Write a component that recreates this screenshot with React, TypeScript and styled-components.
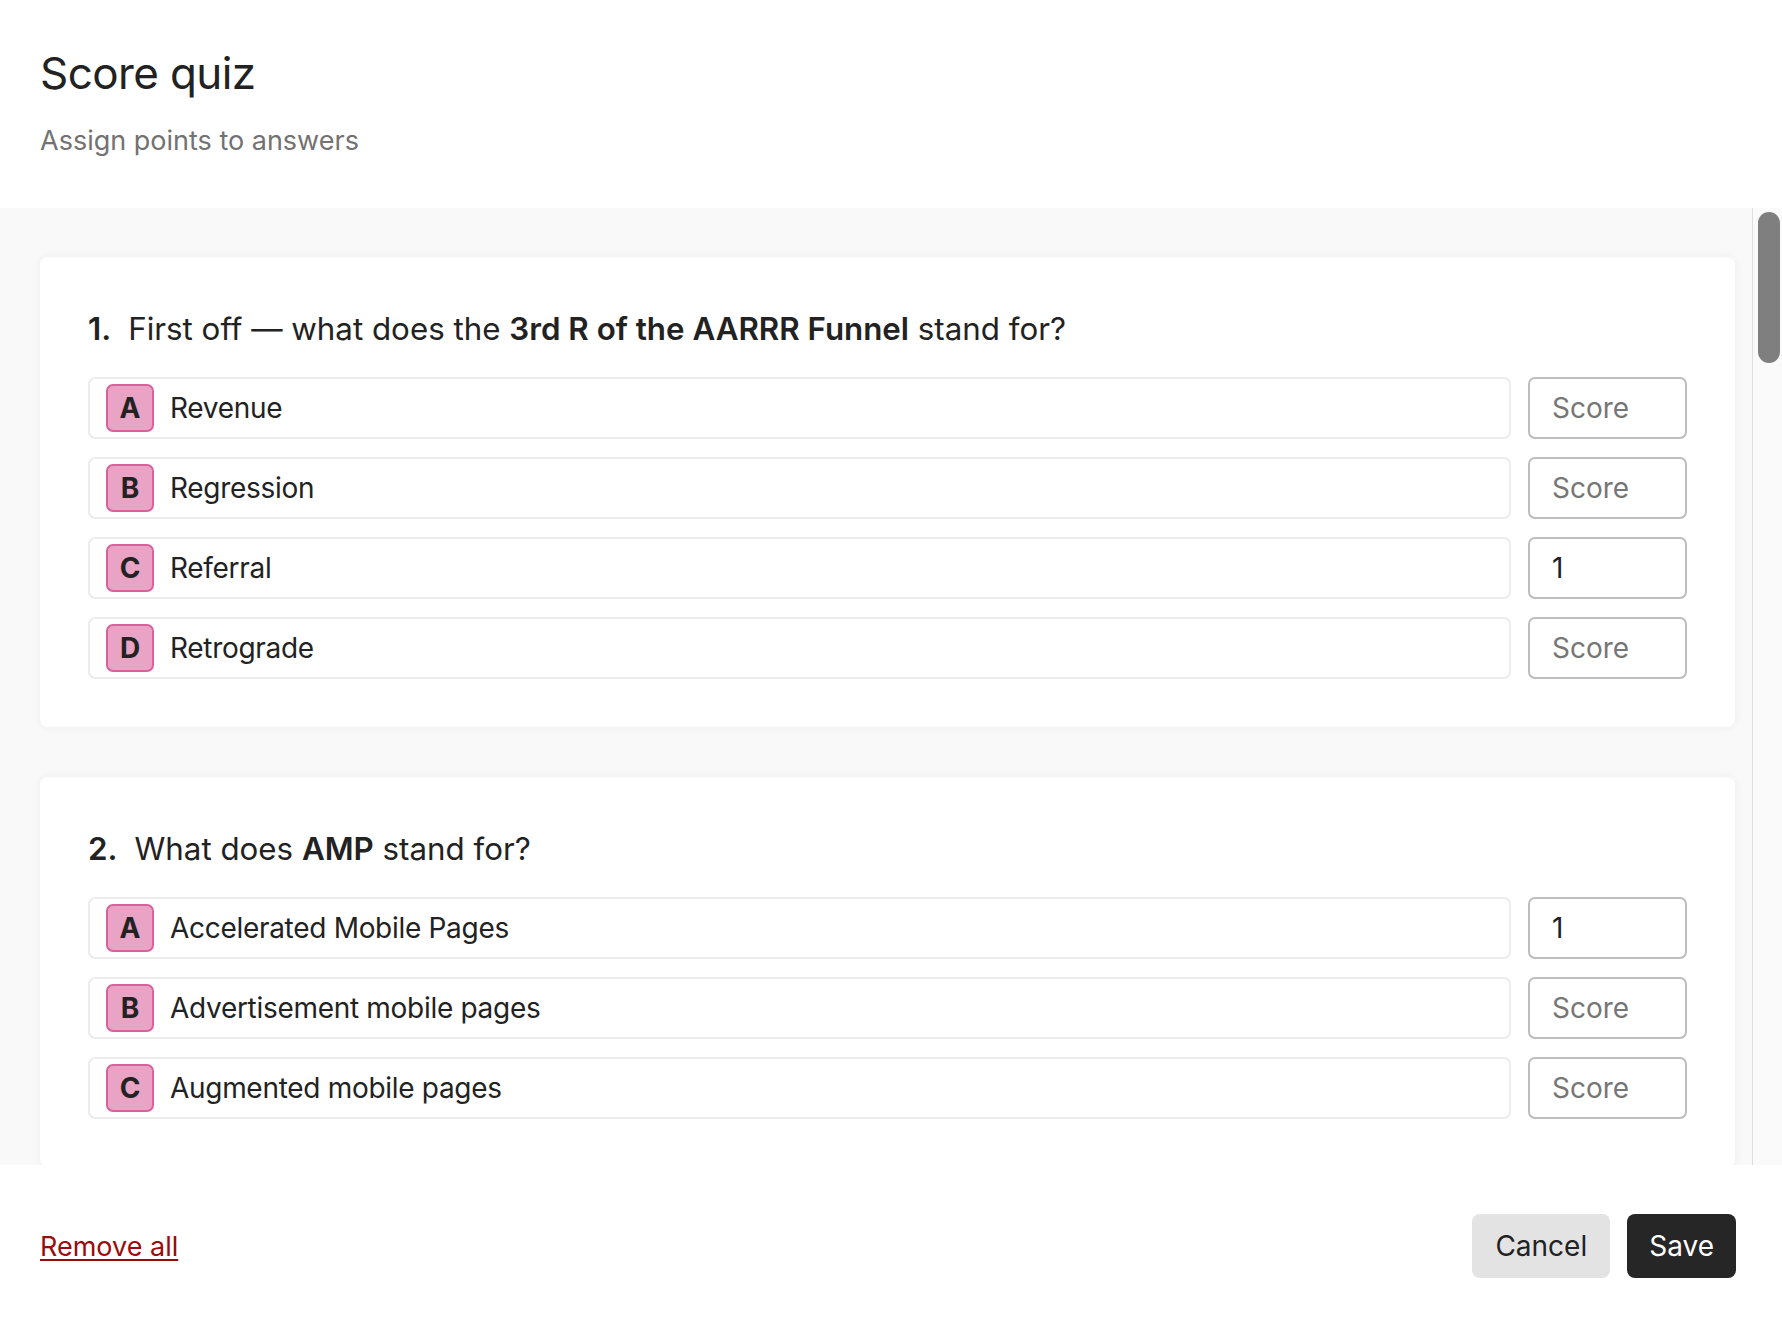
import React from 'react';
import styled, { createGlobalStyle } from 'styled-components';

interface Answer {
  text: string;
  score?: string;
}

interface Question {
  // parts of the prompt, odd entries are bold
  prompt: string[];
  answers: Answer[];
}

const questions: Question[] = [
  {
    prompt: ['First off \u2014 what does the ', '3rd R of the AARRR Funnel', ' stand for?'],
    answers: [
      { text: 'Revenue' },
      { text: 'Regression' },
      { text: 'Referral', score: '1' },
      { text: 'Retrograde' },
    ],
  },
  {
    prompt: ['What does ', 'AMP', ' stand for?'],
    answers: [
      { text: 'Accelerated Mobile Pages', score: '1' },
      { text: 'Advertisement mobile pages' },
      { text: 'Augmented mobile pages' },
    ],
  },
];

const LETTERS = 'ABCDEFGH';

const App: React.FC = () => {
  return (
    <>
      <GlobalStyle />
      <Page>
        <Header>
          <Title>Score quiz</Title>
          <Subtitle>Assign points to answers</Subtitle>
        </Header>

        <Body>
          <Content>
            {questions.map((q, qi) => (
              <Card key={qi}>
                <QuestionText>
                  <Number>{qi + 1}.</Number>
                  {q.prompt.map((part, pi) =>
                    pi % 2 === 1 ? <strong key={pi}>{part}</strong> : <span key={pi}>{part}</span>
                  )}
                </QuestionText>
                <AnswerList>
                  {q.answers.map((a, ai) => (
                    <AnswerRow key={ai}>
                      <AnswerBox>
                        <Badge>{LETTERS[ai]}</Badge>
                        <AnswerText>{a.text}</AnswerText>
                      </AnswerBox>
                      <ScoreInput placeholder="Score" defaultValue={a.score ?? ''} />
                    </AnswerRow>
                  ))}
                </AnswerList>
              </Card>
            ))}
          </Content>
          <ScrollTrack>
            <ScrollThumb />
          </ScrollTrack>
        </Body>

        <Footer>
          <RemoveLink href="#">Remove all</RemoveLink>
          <Actions>
            <Button>Cancel</Button>
            <Button $primary>Save</Button>
          </Actions>
        </Footer>
      </Page>
    </>
  );
};

const GlobalStyle = createGlobalStyle`
  html, body {
    margin: 0;
    padding: 0;
    background: #fff;
  }
  body {
    font-family: Inter, "Noto Sans", "Liberation Sans", sans-serif;
    color: #222;
  }
  * {
    box-sizing: border-box;
  }
`;

const Page = styled.div`
  height: 100vh;
  display: flex;
  flex-direction: column;
  overflow: hidden;
`;

const Header = styled.header`
  flex: none;
  height: 208px;
  padding: 47px 40px 0;
`;

const Title = styled.h1`
  margin: 0;
  font-size: 44px;
  line-height: 53px;
  font-weight: 400;
  letter-spacing: -0.6px;
  color: #222;
`;

const Subtitle = styled.p`
  margin: 23px 0 0;
  font-size: 27px;
  line-height: 35px;
  color: #727272;
`;

const Body = styled.div`
  flex: 1;
  min-height: 0;
  display: flex;
  background: #f9f9f9;
`;

const Content = styled.main`
  flex: 1;
  min-width: 0;
  overflow: hidden;
  padding: 49px 17px 0 40px;
  display: flex;
  flex-direction: column;
  gap: 50px;
`;

const ScrollTrack = styled.div`
  flex: none;
  width: 30px;
  background: #fafafa;
  border-left: 1px solid #dedede;
  padding: 4px 2px 0 5px;
`;

const ScrollThumb = styled.div`
  height: 151px;
  border-radius: 11px;
  background: #7f7f7f;
`;

const Card = styled.section`
  flex: none;
  background: #fff;
  border-radius: 8px;
  box-shadow: 0 0 10px rgba(0, 0, 0, 0.05);
  padding: 52px 48px 48px;
`;

const QuestionText = styled.h2`
  margin: 0 0 28px;
  font-size: 31.3px;
  line-height: 40px;
  font-weight: 400;
  color: #222;

  strong {
    font-weight: 600;
  }
`;

const Number = styled.span`
  font-weight: 600;
  margin-right: 17px;
`;

const AnswerList = styled.div`
  display: flex;
  flex-direction: column;
  gap: 18px;
`;

const AnswerRow = styled.div`
  display: flex;
  gap: 17px;
  height: 62px;
`;

const AnswerBox = styled.div`
  flex: 1;
  display: flex;
  align-items: center;
  gap: 16px;
  padding: 0 16px;
  border: 2px solid #ececec;
  border-radius: 7px;
`;

const Badge = styled.span`
  flex: none;
  width: 48px;
  height: 48px;
  display: flex;
  align-items: center;
  justify-content: center;
  background: #e8a3c5;
  border: 2px solid #d9619c;
  border-radius: 7px;
  font-size: 28px;
  font-weight: 700;
  color: #222;
`;

const AnswerText = styled.span`
  font-size: 28px;
  color: #222;
  letter-spacing: -0.3px;
`;

const ScoreInput = styled.input`
  flex: none;
  width: 159px;
  height: 62px;
  border: 2px solid #bdbdbd;
  border-radius: 7px;
  padding: 0 22px;
  font-family: inherit;
  font-size: 28px;
  color: #222;
  background: #fff;
  outline: none;

  &::placeholder {
    color: #767676;
  }
`;

const Footer = styled.footer`
  flex: none;
  height: 153px;
  padding: 49px 46px 40px 40px;
  display: flex;
  align-items: center;
  justify-content: space-between;
  background: #fff;
`;

const RemoveLink = styled.a`
  font-size: 27px;
  color: #970d0d;
  text-decoration: underline;
  text-underline-offset: 3px;
  text-decoration-thickness: 2px;
`;

const Actions = styled.div`
  display: flex;
  gap: 17px;
`;

const Button = styled.button<{ $primary?: boolean }>`
  height: 64px;
  padding: 0 ${(p) => (p.$primary ? '22px' : '23px')};
  border: none;
  border-radius: 8px;
  font-family: inherit;
  font-size: 28px;
  background: ${(p) => (p.$primary ? '#262626' : '#e3e3e3')};
  color: ${(p) => (p.$primary ? '#fff' : '#222')};
  cursor: pointer;
`;

export default App;
